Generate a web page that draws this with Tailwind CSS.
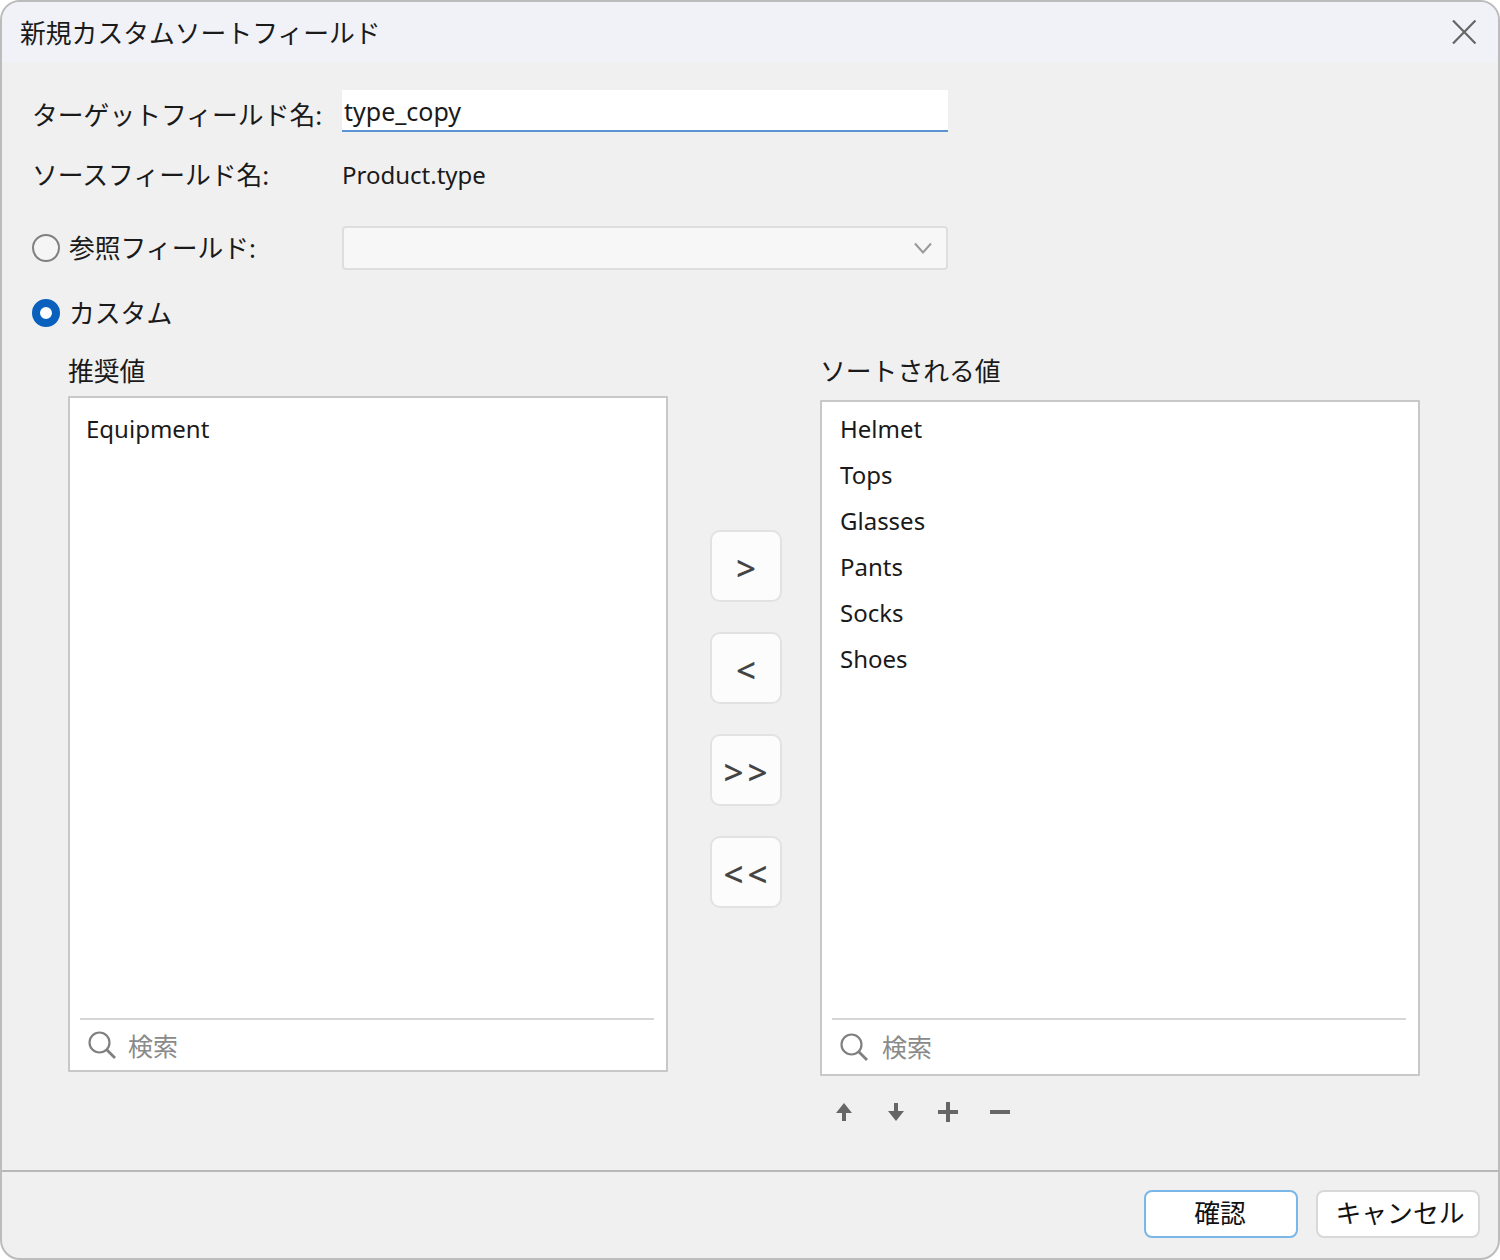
<!DOCTYPE html>
<html lang="ja">
<head>
  <meta charset="UTF-8">
  <title>新規カスタムソートフィールド</title>
  <script src="https://cdn.jsdelivr.net/npm/@tailwindcss/browser@4"></script>
</head>
<body class="bg-white">
  <div class="w-[1500px] h-[1260px] flex flex-col overflow-hidden rounded-[20px] border-2 border-[#bcbcbc] bg-[#f0f0f0] text-[25.8px] leading-[40px] text-[#1a1a1a] font-['Noto_Sans','Noto_Sans_CJK_JP',sans-serif]">
    <!-- Title bar -->
    <div class="h-[60px] shrink-0 flex items-center justify-between pl-[18px] pr-[22px] bg-[#f0f2f8]">
      <span class="mt-[1px]">新規カスタムソートフィールド</span>
      <svg class="w-[24px] h-[24px]" viewBox="0 0 24 24" fill="none" stroke="#666" stroke-width="2.2"><path d="M1 0.500 23.500 23.500M23.500 0.500 1 23.500"/></svg>
    </div>

    <div class="flex-1 pt-[28px] pl-[30px]">
      <div class="flex h-[42px]">
        <span class="w-[310px] shrink-0 leading-[50px]">ターゲットフィールド名:</span>
        <div class="w-[606px] h-[42px] bg-white border-b-2 border-[#5b93d3] pl-[2px] text-[25px] leading-[42px]">type_copy</div>
      </div>
      <div class="flex h-[40px] mt-[23px] items-center">
        <span class="w-[310px] shrink-0 -mt-[1px]">ソースフィールド名:</span>
        <span class="text-[24px] -mt-[1px]">Product.type</span>
      </div>
      <div class="flex h-[44px] mt-[31px] items-center">
        <div class="w-[310px] shrink-0 flex items-center gap-[9px]">
          <span class="w-[28px] h-[28px] rounded-full border-2 border-[#808080] bg-[#f5f5f5]"></span>
          <span>参照フィールド:</span>
        </div>
        <div class="w-[606px] h-[44px] rounded-[4px] border-2 border-[#dedede] bg-[#f7f7f7] flex items-center justify-end pr-[14px]">
          <svg class="w-[18px] h-[12px]" viewBox="0 0 18 12" fill="none" stroke="#999" stroke-width="2"><path d="M1 1.500 9 10.500 17 1.500"/></svg>
        </div>
      </div>
      <div class="flex h-[40px] mt-[23px] items-center gap-[9px]">
        <span class="w-[28px] h-[28px] rounded-full border-[8px] border-[#0a60bd] bg-white"></span>
        <span class="-mt-[1px]">カスタム</span>
      </div>

      <div class="flex mt-[18px] ml-[36px]">
        <!-- Suggested values -->
        <div class="w-[600px] shrink-0">
          <div class="h-[45px] leading-[40px]">推奨値</div>
          <div class="w-[600px] h-[676px] flex flex-col bg-white border-2 border-[#c8c8c8] pl-[16px] pr-[12px]">
            <div class="flex-1 pt-[8px] text-[24px] leading-[46px]">Equipment</div>
            <div class="h-[52px] -ml-[6px] border-t-2 border-[#d6d6d6] flex items-center pl-[8px] gap-[12px] text-[25px] text-[#8a8a8a]">
              <svg class="w-[28px] h-[28px]" viewBox="0 0 28 28" fill="none" stroke="#808080" stroke-width="2.200"><circle cx="11.500" cy="11.500" r="10"/><path d="M18.500 18.500 27 27" stroke-width="2.800"/></svg>
              <span class="mt-[2px]">検索</span>
            </div>
          </div>
        </div>

        <!-- Move buttons -->
        <div class="w-[152px] shrink-0 pl-[42px] pt-[179px] flex flex-col gap-[30px]">
          <div class="w-[72px] h-[72px] pt-[4px] rounded-[10px] border-2 border-[#e2e2e2] bg-[#fcfcfc] flex items-center justify-center text-[35px] font-medium text-[#444]">&gt;</div>
          <div class="w-[72px] h-[72px] pt-[4px] rounded-[10px] border-2 border-[#e2e2e2] bg-[#fcfcfc] flex items-center justify-center text-[35px] font-medium text-[#444]">&lt;</div>
          <div class="w-[72px] h-[72px] pt-[4px] rounded-[10px] border-2 border-[#e2e2e2] bg-[#fcfcfc] flex items-center justify-center text-[35px] font-medium tracking-[4px] text-[#444]"><span class="ml-[3px]">&gt;&gt;</span></div>
          <div class="w-[72px] h-[72px] pt-[4px] rounded-[10px] border-2 border-[#e2e2e2] bg-[#fcfcfc] flex items-center justify-center text-[35px] font-medium tracking-[4px] text-[#444]"><span class="ml-[3px]">&lt;&lt;</span></div>
        </div>

        <!-- Sorted values -->
        <div class="w-[600px] shrink-0">
          <div class="h-[49px] leading-[40px]">ソートされる値</div>
          <div class="w-[600px] h-[676px] flex flex-col bg-white border-2 border-[#c8c8c8] pl-[18px] pr-[12px]">
            <div class="flex-1 pt-[4px] text-[24px] leading-[46px]">
              <div>Helmet</div>
              <div>Tops</div>
              <div>Glasses</div>
              <div>Pants</div>
              <div>Socks</div>
              <div>Shoes</div>
            </div>
            <div class="h-[56px] -ml-[8px] border-t-2 border-[#d6d6d6] flex items-center pl-[8px] gap-[14px] text-[25px] text-[#8a8a8a]">
              <svg class="w-[28px] h-[28px]" viewBox="0 0 28 28" fill="none" stroke="#808080" stroke-width="2.200"><circle cx="11.500" cy="11.500" r="10"/><path d="M18.500 18.500 27 27" stroke-width="2.800"/></svg>
              <span>検索</span>
            </div>
          </div>
          <div class="flex items-center mt-[26px] pl-[16px] h-[20px]">
            <svg class="w-[16px] h-[18px] mr-[36px]" viewBox="0 0 16 18" fill="#666"><path d="M8 0 16 10H10V18H6V10H0Z"/></svg>
            <svg class="w-[16px] h-[18px] mr-[34px]" viewBox="0 0 16 18" fill="#666"><path d="M8 18 0 8H6V0H10V8H16Z"/></svg>
            <svg class="w-[20px] h-[20px] mr-[32px]" viewBox="0 0 20 20" fill="#666"><path d="M8 0H12V8H20V12H12V20H8V12H0V8H8Z"/></svg>
            <svg class="w-[20px] h-[20px]" viewBox="0 0 20 20" fill="#666"><path d="M0 8H20V12H0Z"/></svg>
          </div>
        </div>
      </div>
    </div>

    <!-- Footer -->
    <div class="h-[88px] shrink-0 border-t-2 border-[#b8b8b8] flex justify-end gap-[18px] pt-[18px] pr-[18px]">
      <div class="w-[154px] h-[48px] pb-[2px] pr-[2px] rounded-[8px] border-2 border-[#7ab6e8] bg-white flex items-center justify-center text-[#111]">確認</div>
      <div class="w-[164px] h-[48px] pb-[2px] pl-[4px] rounded-[8px] border-2 border-[#d8d8d8] bg-white flex items-center justify-center text-[#111]">キャンセル</div>
    </div>
  </div>
</body>
</html>
